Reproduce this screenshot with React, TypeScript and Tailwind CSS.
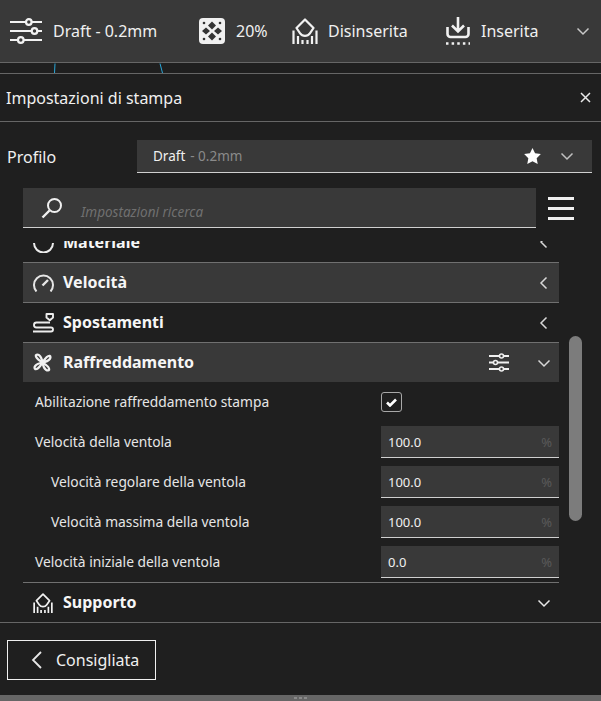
import React from "react";

const Sliders = () => (
  <svg width="32" height="26" viewBox="0 0 32 26" fill="none" stroke="#f2f2f2" strokeWidth="2.200">
    <path d="M0 4h15.500M22 4h10M0 13h21M28 13h4M0 22h7.500M14 22h18" />
    <circle cx="18.800" cy="4" r="2.800" />
    <circle cx="24.500" cy="13" r="2.800" />
    <circle cx="10.800" cy="22" r="2.800" />
  </svg>
);

const SmallSliders = () => (
  <svg width="20" height="19" viewBox="0 0 20 19" fill="none" stroke="#f0f0f0" strokeWidth="2">
    <path d="M0 3h10M15 3h5M0 9.500h4M9 9.500h11M0 16h10M15 16h5" />
    <circle cx="12.500" cy="3" r="2" strokeWidth="1.600" />
    <circle cx="6.500" cy="9.500" r="2" strokeWidth="1.600" />
    <circle cx="12.500" cy="16" r="2" strokeWidth="1.600" />
  </svg>
);

const Infill = () => (
  <svg width="26" height="26" viewBox="0 0 26 26">
    <rect width="26" height="26" rx="4" fill="#f0f0f0" />
    <g fill="#333333">
      <path d="M13 3.500l4 4-4 4-4-4zM7 9.500l4 3.500-4 3.500-4-3.500zM19 9.500l4 3.500-4 3.500-4-3.500zM13 14.500l4 4-4 4-4-4z" />
      <circle cx="5" cy="5" r="1.300" />
      <circle cx="21" cy="5" r="1.300" />
      <circle cx="5" cy="21" r="1.300" />
      <circle cx="21" cy="21" r="1.300" />
    </g>
  </svg>
);

const Support = ({ s = 26, c = "#f2f2f2" }: { s?: number; c?: string }) => (
  <svg width={s} height={s} viewBox="0 0 26 26" fill="none" stroke={c} strokeWidth="2.200">
    <path d="M13 1.500l8.500 8.500-3.600 5.300a6 6 0 0 1-9.800 0L4.500 10z" strokeLinejoin="round" />
    <path d="M1.500 26V12.500M24.500 26V12.500M6 26v-8M20 26v-8M10.500 26v-4M15.500 26v-4" />
  </svg>
);

const Adhesion = () => (
  <svg width="26" height="28" viewBox="0 0 26 28" fill="none" stroke="#f2f2f2" strokeWidth="2.600">
    <path d="M13 0v14M7 8.500l6 6 6-6" />
    <path d="M2.500 10v7a3 3 0 0 0 3 3h15a3 3 0 0 0 3-3v-7" />
    <path d="M1 26.500h24" strokeDasharray="2.500 3.125" />
  </svg>
);

const Chevron = ({ dir, c = "#d8d8d8" }: { dir: "down" | "left"; c?: string }) => (
  <svg width="14" height="14" viewBox="0 0 14 14" fill="none" stroke={c} strokeWidth="1.500">
    <path d={dir === "down" ? "M1.500 4.500L7 10l5.500-5.500" : "M9.500 1.500L4 7l5.500 5.500"} />
  </svg>
);

const Gauge = () => (
  <svg width="21" height="18" viewBox="0 0 21 18" fill="none" stroke="#e6e6e6" strokeWidth="2">
    <path d="M3.500 17.500A9.500 9.500 0 1 1 17.500 17.500" />
    <path d="M9.500 11.500l5.500-5.500" strokeWidth="2.400" />
  </svg>
);

const Travel = () => (
  <svg width="21" height="20" viewBox="0 0 21 20" fill="none" stroke="#ececec" strokeWidth="1.900">
    <path d="M13.500 1h6.500v3.500l-3.200 2.800-3.300-2.800z" strokeLinejoin="round" />
    <path d="M17 9.500H3.500a2.500 2.500 0 0 0 0 5h14.500a2 2 0 0 1 0 4H0" />
  </svg>
);

const Fan = () => (
  <svg width="19" height="19" viewBox="0 0 20 20" fill="none" stroke="#f0f0f0" strokeWidth="2.400" strokeLinejoin="round">
    <path d="M10 10C7 8 2.500 5.500 3 2.500 4 0.500 8.500 1.500 10 10z" />
    <path d="M10 10c2-3 4.500-7.500 7.500-7 2 1 1 5.500-7.500 7z" />
    <path d="M10 10c3 2 7.500 4.500 7 7.500-1 2-5.500 1-7-7.500z" />
    <path d="M10 10c-2 3-4.500 7.500-7.500 7-2-1-1-5.500 7.500-7z" />
  </svg>
);

const Materiale = () => (
  <svg width="21" height="22" viewBox="0 0 21 22" fill="none" stroke="#ececec" strokeWidth="2">
    <path d="M1 12a9.500 9.500 0 0 0 19 0" />
  </svg>
);

const Section = ({
  icon,
  title,
  active,
  children,
}: {
  icon: React.ReactNode;
  title: string;
  active?: boolean;
  children?: React.ReactNode;
}) => (
  <div className={`flex h-10 shrink-0 items-center border-t border-[#707070] pr-[8px] pl-[10px] ${active ? "bg-[#393939]" : ""}`}>
    <div className="flex w-[30px] items-center">{icon}</div>
    <span className="pb-[2px] text-[16px] font-bold text-[#f6f6f6]">{title}</span>
    <div className="ml-auto flex items-center">{children}</div>
  </div>
);

const Setting = ({
  label,
  value,
  indent,
}: {
  label: string;
  value?: string;
  indent?: boolean;
}) => (
  <div className="flex h-10 shrink-0 items-center justify-between">
    <span className={`text-[13.800px] text-[#e6e6e6] ${indent ? "pl-7" : "pl-3"}`}>{label}</span>
    {value ? (
      <div className="flex h-8 w-[178px] items-center justify-between border-b border-[#d0d0d0] bg-[#393939] px-[7px]">
        <span className="pt-[2px] text-[13px] text-[#f0f0f0]">{value}</span>
        <span className="pt-[2px] text-[13px] text-[#5a5a5a]">%</span>
      </div>
    ) : (
      <div className="flex w-[178px]">
        <div className="flex h-5 w-[21px] items-center justify-center rounded-[3px] border border-[#a8a8a8]">
          <svg width="11" height="9" viewBox="0 0 11 9" fill="none" stroke="#fff" strokeWidth="2.600">
            <path d="M1 4.500l3 3 6-6" />
          </svg>
        </div>
      </div>
    )}
  </div>
);

export default function App() {
  return (
    <div className="flex h-[701px] w-[601px] flex-col overflow-hidden bg-[#1f1f1f] font-['Noto_Sans',sans-serif] text-[#f0f0f0]">
      <header className="flex h-[63px] shrink-0 items-center border-b border-[#666666] bg-[#393939] pb-[1px] pl-[10px]">
        <Sliders />
        <span className="ml-[11px] w-[146px] text-[16px]">Draft - 0.2mm</span>
        <Infill />
        <span className="ml-[11px] w-[32px] text-[16px]">20%</span>
        <div className="ml-[24px]"><Support /></div>
        <span className="ml-[10px] w-[80px] text-[16px]">Disinserita</span>
        <div className="ml-[37px]"><Adhesion /></div>
        <span className="ml-[10px] w-[58px] text-[16px]">Inserita</span>
        <div className="ml-[37px]"><Chevron dir="down" c="#c8c8c8" /></div>
      </header>

      <div className="relative h-[11px] shrink-0 border-b border-[#666666]">
        <svg className="absolute top-0 left-0" width="601" height="10" fill="none" stroke="#2aa7d8">
          <path d="M55 0.500L54.500 10M160 0.500L162.500 10" />
        </svg>
      </div>

      <div className="flex h-12 shrink-0 items-center justify-between border-b border-[#666666] pr-[10px] pl-[6px]">
        <span className="text-[16px]">Impostazioni di stampa</span>
        <svg width="11" height="11" viewBox="0 0 11 11" stroke="#e8e8e8" strokeWidth="1.500">
          <path d="M1 1l9 9M10 1l-9 9" />
        </svg>
      </div>

      <div className="mt-[18px] flex h-[33px] shrink-0 items-center pr-[9px] pl-[7px]">
        <span className="w-[130px] text-[16px]">Profilo</span>
        <div className="flex h-full flex-1 items-center border-b border-[#d0d0d0] bg-[#393939] pr-[18px] pl-4">
          <span className="text-[13.500px]">Draft</span>
          <span className="ml-[5px] text-[13.500px] text-[#8a8a8a]">- 0.2mm</span>
          <svg className="mr-[19px] ml-auto" width="17" height="16" viewBox="0 0 24 23" fill="#fff">
            <path d="M12 0l3.700 7.700 8.300 1.100-6 5.900 1.500 8.300-7.500-4-7.500 4L6 14.700 0 8.800l8.300-1.100z" />
          </svg>
          <Chevron dir="down" c="#c0c0c0" />
        </div>
      </div>

      <div className="mt-[15px] flex h-10 shrink-0 items-center pl-[23px]">
        <div className="flex h-full w-[513px] items-center border-b border-[#d0d0d0] bg-[#393939] pl-[18px]">
          <svg width="22" height="22" viewBox="0 0 22 22" fill="none" stroke="#f0f0f0" strokeWidth="2">
            <circle cx="13.500" cy="8.500" r="6.500" />
            <path d="M8.500 13.500L1.500 20.500" strokeWidth="2.400" />
          </svg>
          <span className="ml-[18px] pt-[10px] text-[13.500px] text-[#707070] italic">Impostazioni ricerca</span>
        </div>
        <div className="ml-3 flex w-[26px] flex-col gap-[7px]">
          <div className="h-[3px] bg-[#f0f0f0]" />
          <div className="h-[3px] bg-[#f0f0f0]" />
          <div className="h-[3px] bg-[#f0f0f0]" />
        </div>
      </div>

      <div className="mt-[13px] flex h-[382px] shrink-0 items-start border-b border-[#666666] pl-[23px]">
        <div className="flex h-full w-[536px] flex-col overflow-hidden">
          <div className="-mt-[19px] flex flex-col">
            <div className="flex h-10 shrink-0 items-center pr-[8px] pl-[10px]">
              <div className="flex w-[30px] items-center"><Materiale /></div>
              <span className="text-[16px] font-bold text-[#f6f6f6]">Materiale</span>
              <div className="ml-auto"><Chevron dir="left" /></div>
            </div>
            <Section icon={<Gauge />} title="Velocità" active>
              <Chevron dir="left" />
            </Section>
            <Section icon={<Travel />} title="Spostamenti">
              <Chevron dir="left" />
            </Section>
            <Section icon={<Fan />} title="Raffreddamento" active>
              <div className="mr-[28px]"><SmallSliders /></div>
              <Chevron dir="down" />
            </Section>
            <Setting label="Abilitazione raffreddamento stampa" />
            <Setting label="Velocità della ventola" value="100.0" />
            <Setting label="Velocità regolare della ventola" value="100.0" indent />
            <Setting label="Velocità massima della ventola" value="100.0" indent />
            <Setting label="Velocità iniziale della ventola" value="0.0" />
            <Section icon={<Support s={20} />} title="Supporto">
              <Chevron dir="down" c="#e8e8e8" />
            </Section>
          </div>
        </div>
        <div className="mt-[95px] ml-[10px] h-[185px] w-[13px] rounded-full bg-[#7c7c7c]" />
      </div>

      <div className="mt-[17px] ml-[7px] flex h-10 w-[149px] shrink-0 items-center border border-[#f0f0f0] pl-[22px]">
        <svg width="14" height="18" viewBox="0 0 14 18" fill="none" stroke="#e8e8e8" strokeWidth="1.800">
          <path d="M11 1L3 9l8 8" />
        </svg>
        <span className="ml-[12px] text-[16px]">Consigliata</span>
      </div>

      <div className="mt-auto flex h-[6px] shrink-0 justify-center gap-[2px] bg-[#666666] pt-[2px]">
        <div className="h-[2px] w-[3px] bg-[#8a8a8a]" />
        <div className="h-[2px] w-[3px] bg-[#8a8a8a]" />
        <div className="h-[2px] w-[3px] bg-[#8a8a8a]" />
      </div>
    </div>
  );
}
